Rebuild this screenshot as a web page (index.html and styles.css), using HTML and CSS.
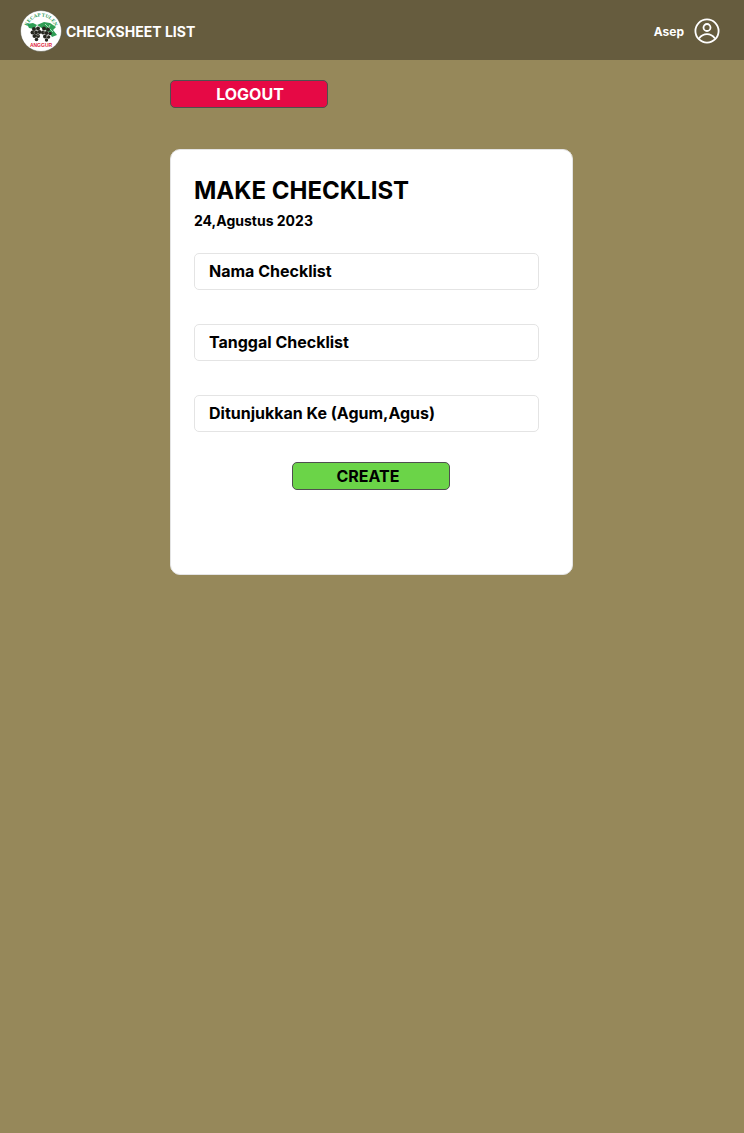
FILE: index.html
```html
<!DOCTYPE html>
<html lang="id">

<head>
  <meta charset="UTF-8">
  <meta name="viewport" content="width=device-width, initial-scale=1">
  <title>Checksheet List</title>
  <link rel="stylesheet" href="styles.css">
</head>

<body>
  <header class="topbar">
    <div class="brand">
      <svg class="logo" width="42" height="42" viewBox="0 0 42 42">
        <defs>
          <path id="logo-arc" d="M6.5 21 A14.5 14.5 0 0 1 35.5 21"/>
        </defs>
        <circle cx="21" cy="21" r="20.5" fill="#fff" stroke="#4a4a3a" stroke-width="0.5"/>
        <!-- daun -->
        <path d="M7 14 L13 13 L17 15 L14 19 L9 18 Z" fill="#2f9e55"/>
        <path d="M17 15 L24 12 L30 13 L36 17 L33 20 L37 25 L32 27 L29 22 L23 19 Z" fill="#2f9e55"/>
        <path d="M25 14 L33 22 M30 15 L28 19" stroke="#fff" stroke-width="0.6" fill="none"/>
        <!-- anggur -->
        <g fill="#26261f">
          <circle cx="14" cy="19" r="2"/>
          <circle cx="18" cy="18.5" r="2"/>
          <circle cx="12.5" cy="22.5" r="2"/>
          <circle cx="16" cy="22.5" r="2"/>
          <circle cx="19.5" cy="22" r="2"/>
          <circle cx="14.5" cy="26" r="2"/>
          <circle cx="18" cy="26" r="2"/>
          <circle cx="16.5" cy="29.5" r="1.8"/>
          <circle cx="24" cy="18.5" r="2"/>
          <circle cx="28" cy="19.5" r="2"/>
          <circle cx="23" cy="22.5" r="2"/>
          <circle cx="26.5" cy="23" r="2"/>
          <circle cx="30" cy="23.5" r="1.8"/>
          <circle cx="25" cy="26.5" r="2"/>
          <circle cx="28.5" cy="27" r="1.8"/>
          <circle cx="26.5" cy="30" r="1.7"/>
        </g>
        <g fill="#b9b9ad">
          <circle cx="14" cy="22" r="0.5"/>
          <circle cx="18" cy="25.5" r="0.5"/>
          <circle cx="24" cy="22" r="0.5"/>
          <circle cx="27" cy="26.5" r="0.5"/>
        </g>
        <text class="logo-top"><textPath href="#logo-arc" startOffset="50%">KECAP TULEN</textPath></text>
        <text x="21" y="37" class="logo-bottom">ANGGUR</text>
      </svg>
      <span class="brand-name">CHECKSHEET LIST</span>
    </div>
    <div class="user">
      <span class="user-name">Asep</span>
      <svg width="28" height="28" viewBox="0 0 28 28" fill="none" stroke="#fff" stroke-width="1.8">
        <circle cx="14" cy="14" r="11.6"/>
        <circle cx="14" cy="10.5" r="3.5"/>
        <path d="M6 21.5 C8.5 18.2 11 17.2 14 17.2 C17 17.2 19.5 18.2 22 21.5"/>
      </svg>
    </div>
  </header>

  <main class="content">
    <button class="btn btn-logout">LOGOUT</button>

    <section class="card">
      <h1>MAKE CHECKLIST</h1>
      <p class="date">24,Agustus 2023</p>
      <div class="fields">
        <input class="field" type="text" placeholder="Nama Checklist">
        <input class="field" type="text" placeholder="Tanggal Checklist">
        <input class="field" type="text" placeholder="Ditunjukkan Ke (Agum,Agus)">
      </div>
      <div class="actions">
        <button class="btn btn-create">CREATE</button>
      </div>
    </section>
  </main>
</body>

</html>
```

FILE: styles.css
```css
* {
  box-sizing: border-box;
}

body {
  margin: 0;
  min-height: 1133px;
  background-color: #96885A;
  font-family: Inter, "Liberation Sans", sans-serif;
}

.topbar {
  display: flex;
  align-items: center;
  justify-content: space-between;
  height: 60px;
  padding: 2px 23px 0 20px;
  background-color: #665C3E;
  color: #FFFFFF;
}

.brand {
  display: flex;
  align-items: center;
  gap: 4px;
}

.logo {
  display: block;
}

.logo-top {
  font-family: "Liberation Serif", serif;
  font-size: 5px;
  font-weight: 700;
  fill: #1f9a55;
  text-anchor: middle;
}

.logo-bottom {
  font-family: "Liberation Sans", sans-serif;
  font-size: 5px;
  font-weight: 700;
  fill: #e0263c;
  text-anchor: middle;
}

.brand-name {
  font-size: 14px;
  font-weight: 650;
}

.user {
  display: flex;
  align-items: center;
  gap: 9px;
}

.user-name {
  font-size: 12px;
  font-weight: 650;
}

.content {
  width: 403px;
  margin-left: 170px;
  padding-top: 20px;
}

.btn {
  display: block;
  width: 158px;
  height: 28px;
  border: 1px solid #4F4F4F;
  border-radius: 5px;
  font-family: inherit;
  font-size: 16px;
  font-weight: 650;
}

.btn-logout {
  padding: 0 0 0 2px;
  background-color: #E60945;
  color: #FFFFFF;
}

.btn-create {
  padding: 0 6px 0 0;
  background-color: #6BD448;
  color: #000000;
}

.card {
  height: 426px;
  margin-top: 41px;
  padding: 24px 23px;
  background-color: #FFFFFF;
  border: 1px solid #E4E4E4;
  border-radius: 10px;
}

h1 {
  margin: 1px 0 0;
  font-size: 24px;
  line-height: 32px;
  font-weight: 650;
  color: #000000;
}

.date {
  margin: 4px 0 0;
  font-size: 14px;
  line-height: 20px;
  font-weight: 650;
  color: #000000;
}

.fields {
  display: flex;
  flex-direction: column;
  gap: 34px;
  margin-top: 22px;
}

.field {
  width: 345px;
  height: 37px;
  padding: 0 14px 2px;
  border: 1px solid #E4E4E4;
  border-radius: 5px;
  background-color: #FFFFFF;
  font-family: inherit;
  font-size: 16px;
  font-weight: 650;
}

.field::placeholder {
  color: #000000;
  opacity: 1;
}

.actions {
  margin-top: 30px;
  padding-left: 98px;
}
```
